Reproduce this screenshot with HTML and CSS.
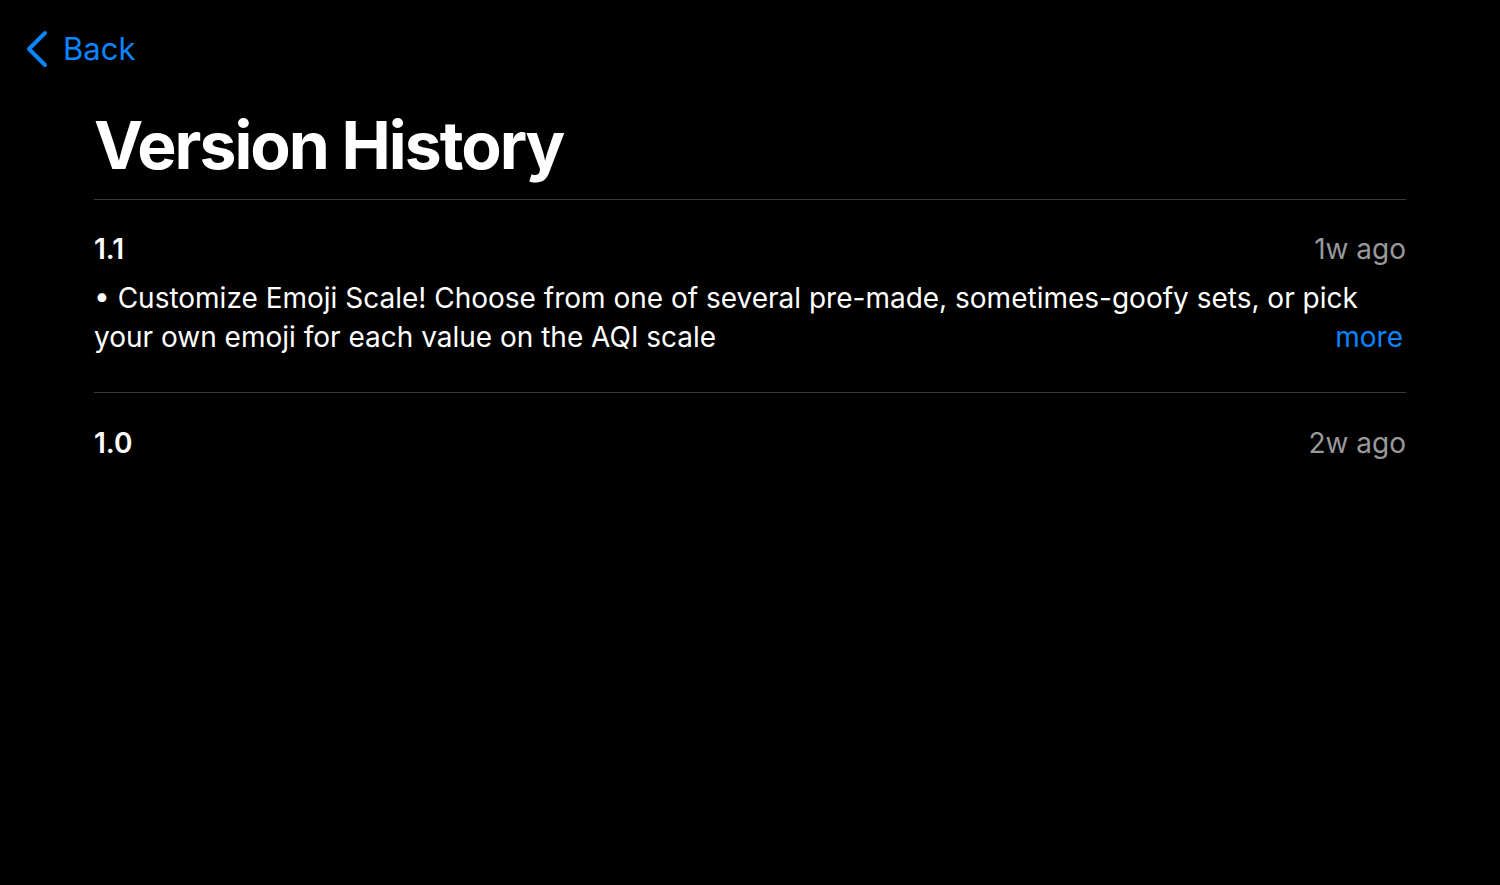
FILE: index.html
```html
<!DOCTYPE html>
<html lang="en">
<head>
<meta charset="utf-8">
<title>Version History</title>
<link rel="stylesheet" href="styles.css">
</head>
<body>
<nav class="nav">
  <a class="back" href="#">
    <svg class="chev" width="24" height="38" viewBox="0 0 24 38" aria-hidden="true">
      <path d="M20 3 L4 19 L20 35" fill="none" stroke="currentColor" stroke-width="4" stroke-linecap="round" stroke-linejoin="round"/>
    </svg>
    <span>Back</span>
  </a>
</nav>
<main class="content">
  <h1 class="title">Version History</h1>
  <section class="version">
    <div class="vhead">
      <span class="vnum">1.1</span>
      <span class="vdate">1w ago</span>
    </div>
    <div class="notes">
      <p class="line">• Customize Emoji Scale! Choose from one of several pre-made, sometimes-goofy sets, or pick</p>
      <div class="lastline">
        <p class="line">your own emoji for each value on the AQI scale</p>
        <a class="more" href="#">more</a>
      </div>
    </div>
  </section>
  <section class="version last">
    <div class="vhead">
      <span class="vnum">1.0</span>
      <span class="vdate">2w ago</span>
    </div>
  </section>
</main>
</body>
</html>
```
FILE: styles.css
```css
html, body {
  margin: 0;
  padding: 0;
  background: #000;
  color: #fff;
  font-family: Inter, "Noto Sans", "Liberation Sans", sans-serif;
}
body {
  width: 1500px;
  height: 885px;
  overflow: hidden;
}
.nav {
  height: 101px;
  padding-left: 25px;
  display: flex;
  align-items: flex-start;
}
.back {
  margin-top: 30px;
  display: flex;
  align-items: center;
  gap: 14px;
  color: #0a84ff;
  text-decoration: none;
  font-size: 31px;
  line-height: 38px;
}
.chev { display: block; }
.content {
  margin: 0 94px;
}
.title {
  margin: 0;
  font-size: 66px;
  font-weight: 700;
  line-height: 88px;
  letter-spacing: -2px;
  padding-bottom: 10px;
  border-bottom: 1px solid #3a3a3c;
}
.version {
  border-bottom: 1px solid #3a3a3c;
  padding: 30px 0 35px;
}
.version.last {
  border-bottom: none;
  padding-top: 31px;
}
.vhead {
  display: flex;
  justify-content: space-between;
  align-items: baseline;
  font-size: 28px;
  line-height: 38px;
}
.vnum { font-weight: 600; }
.vdate { color: #98989d; }
.notes {
  margin-top: 11px;
  font-size: 28px;
  line-height: 39px;
}
.line { margin: 0; }
.lastline {
  display: flex;
  justify-content: space-between;
  align-items: baseline;
}
.more {
  color: #0a84ff;
  text-decoration: none;
  margin-right: 3px;
}
```
